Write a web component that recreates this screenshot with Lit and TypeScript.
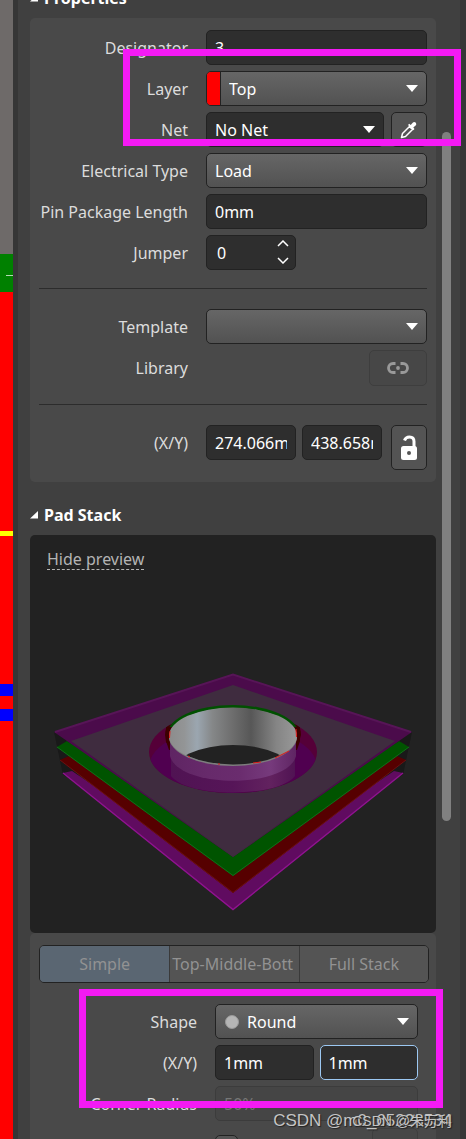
import { LitElement, html, css, svg } from "lit";
import { customElement, property } from "lit/decorators.js";

const arrow = html`<svg class="arrow" viewBox="0 0 12 7" aria-hidden="true"><path d="M0 0h12L6 7z" fill="#fff" /></svg>`;

@customElement("pad-preview")
export class PadPreview extends LitElement {
  static styles = css`
    :host { display: block; }
    svg { display: block; width: 100%; }
  `;
  render() {
    return html`<svg viewBox="30 575 406 358" role="img" aria-label="Pad stack preview">
      ${svg`
      <defs>
        <linearGradient id="wall" x1="0" x2="1" y1="0" y2="0">
          <stop offset="0" stop-color="#8c8c8c" /><stop offset=".12" stop-color="#939596" />
          <stop offset=".22" stop-color="#9ba6b0" /><stop offset=".34" stop-color="#858788" />
          <stop offset=".5" stop-color="#6d6d6d" /><stop offset=".64" stop-color="#575757" />
          <stop offset=".84" stop-color="#858585" /><stop offset="1" stop-color="#999" />
        </linearGradient>
        <linearGradient id="skin" x1="0" x2="1" y1="0" y2="0">
          <stop offset="0" stop-color="#5f2563" /><stop offset=".3" stop-color="#672a6b" />
          <stop offset=".55" stop-color="#6a2c6e" /><stop offset=".8" stop-color="#763a7c" />
          <stop offset="1" stop-color="#5f2563" />
        </linearGradient>
        <linearGradient id="skirt" x1="0" x2="1" y1="0" y2="0">
          <stop offset="0" stop-color="#501353" /><stop offset=".5" stop-color="#561558" />
          <stop offset=".8" stop-color="#62225f" /><stop offset="1" stop-color="#501353" />
        </linearGradient>
        <clipPath id="rim"><ellipse cx="233" cy="736.5" rx="63" ry="28" /></clipPath>
        <clipPath id="pit"><ellipse cx="233" cy="752" rx="84" ry="41" /></clipPath>
      </defs>
      <path d="M54 732L63 775L80 782L77 738z M412 732L403 775L386 782L389 738z" fill="#191919" />
      <path d="M63 773L72 771L233 880L394 771L403 773L233 910z" fill="#600b60" />
      <path d="M63 773L233 909.500L403 773" fill="none" stroke="#8f138f" stroke-width="1.400" />
      <path d="M60 760L69 756L233 870L397 756L406 760L233 893z" fill="#560000" />
      <path d="M60 760L233 892.500L406 760" fill="none" stroke="#6c1010" />
      <path d="M57 747L67 741L233 850L399 741L409 747L233 876z" fill="#005400" />
      <path d="M57 747L233 875.500L409 747" fill="none" stroke="#107018" />
      <path d="M54 732L233 674L412 732L399 741L233 857L67 741z" fill="#4b0b4b" />
      <path d="M55 732L233 674.500L411 732" fill="none" stroke="#571557" stroke-width="2" />
      <path d="M71 741L233 685L395 741L233 857z" fill="#3f2c3f" />
      <ellipse cx="233" cy="752" rx="84" ry="41" fill="#550038" />
      <ellipse cx="233" cy="767" rx="84" ry="41" fill="#500050" clip-path="url(#pit)" />
      <path d="M165 735C165 725 172 717 182 712H284C294 717 301 725 301 735L299 742L296 748H170L166 742z" fill="#3d0000" clip-path="url(#pit)" />
      <ellipse cx="233" cy="735" rx="66" ry="30" fill="#005000" />
      <path d="M166 727H182V750H169L166 741z M300 727H284V750H297L300 741z" fill="#3d0000" clip-path="url(#pit)" />
      <path d="M171 740V776C188 798 278 798 295 776V740z" fill="url(#skirt)" />
      <path d="M170 738V756C179 789 287 789 296 756V738z" fill="url(#skin)" />
      <ellipse cx="233" cy="737" rx="64" ry="29" fill="#7d7d7d" />
      <ellipse cx="233" cy="736" rx="64" ry="28.500" fill="url(#wall)" />
      <ellipse cx="233" cy="773" rx="61" ry="28" fill="#222" clip-path="url(#rim)" />
      <path d="M253 763l8-1M275 758l14-7" stroke="#e01818" fill="none" />
      <path d="M170 731l-.5 7M188 756l2 1M218 764h2M296 729l.500 8" stroke="#e01818" fill="none" />
      `}
    </svg>`;
  }
}

@customElement("layer-strip")
export class LayerStrip extends LitElement {
  static styles = css`
    :host { display: flex; flex-direction: column; background: #f00; overflow: hidden; }
    .board { height: 254px; background: #6e6a69; }
    .green { height: 38px; background: #008000; display: flex; align-items: center; justify-content: flex-end; padding-top: 4px; box-sizing: border-box; }
    .tick { width: 7px; height: 1px; background: #b5d8b5; }
    .yellow { height: 5px; margin-top: 239px; background: #ff0; }
    .blue { height: 12px; margin-top: 148px; background: #00f; }
    .next { margin-top: 13px; }
  `;
  render() {
    return html`<div class="board"></div><div class="green"><div class="tick"></div></div>
      <div class="yellow"></div><div class="blue"></div><div class="blue next"></div>`;
  }
}

@customElement("app-root")
export class AppRoot extends LitElement {
  @property() focused = "size-y";

  static styles = css`
    :host {
      display: block; position: relative; height: 100vh; overflow: hidden;
      font: 16px/22px "Noto Sans", "Noto Sans CJK SC", sans-serif; color: #dcdcdc; background: #363636;
    }
    * { box-sizing: border-box; }
    .shell { display: grid; grid-template-columns: 13px 1fr; column-gap: 5px; height: 100%; padding-right: 6px; }
    .panel { display: grid; grid-template-columns: 1fr 9px; column-gap: 6px; padding: 0 9px 0 12px; background: #404040; overflow: hidden; }
    .content { min-width: 0; margin-top: -13px; }
    h2 { display: flex; align-items: center; gap: 6px; margin: 0; font-size: 16px; line-height: 22px; color: #fff; }
    h2 svg { width: 8px; height: 8px; }
    .card { margin-top: 9px; padding: 12px 9px; border-radius: 5px; background: #494949; }
    .row { display: grid; grid-template-columns: 149px 1fr; column-gap: 18px; align-items: start; margin-bottom: 6px; min-height: 35px; }
    .label { text-align: right; white-space: nowrap; line-height: 36px; height: 35px; }
    .fields { display: flex; gap: 7px; align-items: flex-start; min-width: 0; }
    .row:last-child { margin-bottom: 0; }
    input, select, button { font: inherit; color: #fff; margin: 0; outline: none; }
    input, .pick {
      height: 35px; min-width: 0; width: 100%; border: 1px solid #222; border-radius: 5px; background: #2e2e2e; padding: 0 8px;
    }
    input:disabled { color: #777; background: #454545; border-color: #3c3c3c; }
    .focus { border-color: #9cc8f2; }
    .pick { position: relative; display: flex; align-items: center; padding: 0; overflow: hidden; }
    .raised { background: linear-gradient(#666, #525252); }
    select { appearance: none; flex: 1; min-width: 0; height: 100%; padding: 0 8px; border: 0; background: none; }
    .arrow { position: absolute; right: 8px; width: 12px; height: 7px; pointer-events: none; }
    .swatch { width: 14px; height: 100%; background: #f00; border-right: 1px solid #222; }
    .dot { width: 14px; height: 14px; margin-left: 9px; border-radius: 50%; background: #b5b5b5; border: 1px solid #999; }
    button { display: flex; align-items: center; justify-content: center; padding: 0; border: 1px solid #222; border-radius: 5px; background: #545454; }
    .square { flex: 0 0 36px; height: 35px; }
    .tall { height: 45px; margin-left: 3px; }
    .link { width: 58px; height: 36px; margin-left: auto; background: #474747; border-color: #3e3e3e; }
    .spin { display: flex; width: 90px; height: 35px; border: 1px solid #222; border-radius: 5px; background: #2e2e2e; }
    .spin input { flex: 1; border: 0; height: 33px; background: none; padding: 0 10px; }
    .steps { flex: 0 0 22px; display: flex; flex-direction: column; justify-content: space-between; padding-bottom: 2px; }
    .steps button { width: 20px; height: 14px; border: 0; background: none; }
    .pair { gap: 6px; }
    .wide { flex: 0 0 90px; }
    .rest { flex: 1; }
    hr { height: 1px; margin: 18px 0 20px; border: 0; background: #2c2c2c; }
    .before-rule { margin-bottom: 0; }
    .pad-title { margin-top: 22px; }
    .preview { margin-top: 9px; border-radius: 5px; background: #222; overflow: hidden; }
    .preview-head { height: 40px; padding: 13px 17px 0; }
    a { display: inline-block; line-height: 19px; color: #b4b4b4; text-decoration: none; border-bottom: 1px dashed #b4b4b4; }
    .lower { margin-top: 0; padding-bottom: 40px; }
    .tabs { display: grid; grid-template-columns: repeat(3, 1fr); margin-bottom: 21px; margin-right: -2px; border: 1px solid #222; border-radius: 5px; overflow: hidden; }
    .tabs button { min-width: 0; height: 36px; border: 0; border-radius: 0; color: #929292; white-space: nowrap; overflow: hidden; }
    .tabs button + button { border-left: 1px solid #3a3a3a; }
    .tabs .on { background: #5a6672; }
    .tabs .clip { justify-content: flex-start; padding-left: 2px; }
    .inset { padding: 0 9px; }
    .options { align-items: center; justify-content: space-between; height: 38px; }
    .options input { appearance: none; width: 23px; height: 22px; padding: 0; background: #555; }
    .options button { width: 46px; height: 36px; background: #474747; border-color: #3e3e3e; }
    .track { padding-top: 132px; }
    .thumb { height: 689px; border-radius: 5px; background: #808080; }
    .mark { position: absolute; border: 7px solid #f41af4; pointer-events: none; }
    .mark-top { left: 123px; right: 5px; top: 49px; height: 97px; }
    .mark-bottom { left: 79px; right: 23px; top: 989px; height: 119px; }
    .credit { position: absolute; bottom: 7px; font-family: "Liberation Sans", "Noto Sans CJK SC", sans-serif; color: #c4c4c4; text-shadow: 1px 1px 1px #222; white-space: nowrap; pointer-events: none; }
    .large { right: 14px; font-size: 17px; }
    .small { right: 14px; font-size: 14px; }
  `;

  private tri() {
    return html`<svg viewBox="0 0 8 8" aria-hidden="true"><path d="M8 0v7.500H0z" fill="#fff" /></svg>`;
  }

  render() {
    return html`
      <div class="shell">
        <layer-strip></layer-strip>
        <main class="panel">
          <div class="content">
            <h2>${this.tri()}Properties</h2>
            <section class="card">
              <div class="row"><label class="label" for="designator">Designator</label>
                <div class="fields"><input id="designator" value="3" /></div></div>
              <div class="row"><label class="label" for="layer">Layer</label>
                <div class="fields"><div class="pick raised"><span class="swatch"></span><select id="layer"><option>Top</option></select>${arrow}</div></div></div>
              <div class="row"><label class="label" for="net">Net</label>
                <div class="fields"><div class="pick"><select id="net"><option>No Net</option></select>${arrow}</div>
                  <button class="square" aria-label="Pick net"><svg width="18" height="18" viewBox="0 0 18 18"><path d="M1.500 16.500l1-4 7-7 3 3-7 7z" fill="none" stroke="#fff" stroke-width="1.500" stroke-linejoin="round" /><path d="M8 4l1.200-1.200 1.500 1.200 2-2.300c2-1.900 4.800.900 2.900 2.900l-2.300 2 1.200 1.500L13.300 9.300z" fill="#fff" /></svg></button></div></div>
              <div class="row"><label class="label" for="etype">Electrical Type</label>
                <div class="fields"><div class="pick raised"><select id="etype"><option>Load</option></select>${arrow}</div></div></div>
              <div class="row"><label class="label" for="length">Pin Package Length</label>
                <div class="fields"><input id="length" value="0mm" /></div></div>
              <div class="row before-rule"><label class="label" for="jumper">Jumper</label>
                <div class="fields"><div class="spin"><input id="jumper" value="0" /><div class="steps">
                  <button aria-label="Increase"><svg width="12" height="7" viewBox="0 0 12 7"><path d="M1 6l5-5 5 5" fill="none" stroke="#fff" stroke-width="1.500" /></svg></button>
                  <button aria-label="Decrease"><svg width="12" height="7" viewBox="0 0 12 7"><path d="M1 1l5 5 5-5" fill="none" stroke="#fff" stroke-width="1.500" /></svg></button></div></div></div></div>
              <hr />
              <div class="row"><label class="label" for="template">Template</label>
                <div class="fields"><div class="pick raised"><select id="template"><option></option></select>${arrow}</div></div></div>
              <div class="row before-rule"><span class="label">Library</span>
                <div class="fields"><button class="link" aria-label="Link library"><svg width="24" height="14" viewBox="0 0 24 14"><path d="M9.500 2.500H7a4.500 4.500 0 0 0 0 9h2.500M14.500 2.500H17a4.500 4.500 0 0 1 0 9h-2.500" fill="none" stroke="#999" stroke-width="2.800" /><circle cx="12" cy="7" r="1.900" fill="#999" /></svg></button></div></div>
              <hr />
              <div class="row"><label class="label" for="pos-x">(X/Y)</label>
                <div class="fields pair"><input class="wide" id="pos-x" value="274.066mm" /><input class="rest" aria-label="Y position" value="438.658mm" />
                  <button class="square tall" aria-label="Unlock position"><svg width="18" height="26" viewBox="0 0 18 26"><path d="M4.500 5.500C5.500 2.500 7 2 9.500 2C12.500 2 14 4 14 6.500V13" fill="none" stroke="#fff" stroke-width="3" /><rect x="1" y="11" width="16" height="14" rx="2.500" fill="#fff" /><circle cx="9" cy="18" r="2" fill="#545454" /></svg></button></div></div>
            </section>
            <h2 class="pad-title">${this.tri()}Pad Stack</h2>
            <div class="preview"><div class="preview-head"><a href="#preview">Hide preview</a></div><pad-preview></pad-preview></div>
            <section class="card lower">
              <div class="tabs"><button class="on">Simple</button><button class="clip">Top-Middle-Bott</button><button>Full Stack</button></div>
              <div class="inset">
                <div class="row"><label class="label" for="shape">Shape</label>
                  <div class="fields"><div class="pick raised"><span class="dot"></span><select id="shape"><option>Round</option></select>${arrow}</div></div></div>
                <div class="row"><label class="label" for="size-x">(X/Y)</label>
                  <div class="fields pair"><input id="size-x" value="1mm" /><input class=${this.focused === "size-y" ? "focus" : ""} aria-label="Y size" value="1mm" /></div></div>
                <div class="row"><label class="label" for="radius">Corner Radius</label>
                  <div class="fields"><input id="radius" value="50%" disabled /></div></div>
                <div class="row"><span></span>
                  <div class="fields options"><input type="checkbox" aria-label="Offset" /><button aria-label="Options" disabled></button></div></div>
              </div>
            </section>
          </div>
          <div class="track"><div class="thumb"></div></div>
        </main>
      </div>
      <div class="mark mark-top"></div>
      <div class="mark mark-bottom"></div>
      <div class="credit large">CSDN @m0_65228534</div>
      <div class="credit small">CSDN @朱万利</div>
    `;
  }
}
